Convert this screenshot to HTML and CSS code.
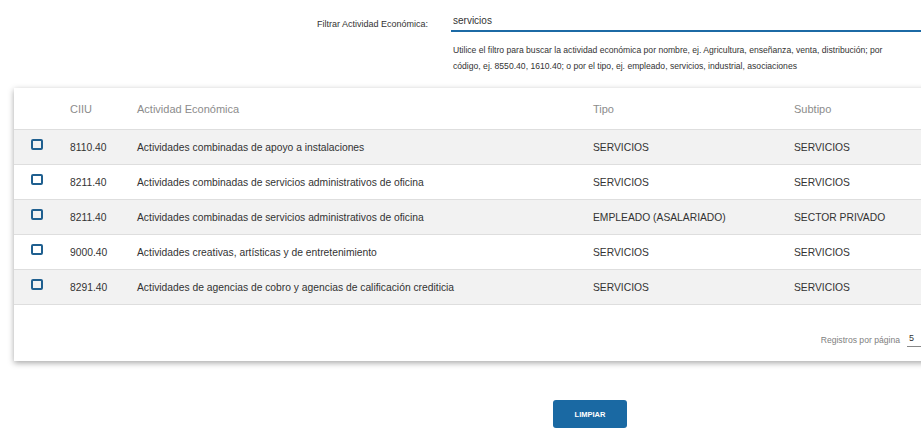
FILE: index.html
```html
<!DOCTYPE html>
<html lang="es">

<head>
    <meta charset="UTF-8" />
    <title>Actividad Económica</title>
    <link rel="stylesheet" href="styles.css">
</head>

<body>
    <div class="filter">
        <label class="filter-label" for="filtro">Filtrar Actividad Económica:</label>
        <div class="filter-field">
            <input id="filtro" class="filter-input" type="text" value="servicios" autofocus />
            <p class="hint">Utilice el filtro para buscar la actividad económica por nombre, ej. Agricultura, enseñanza, venta, distribución; por código, ej. 8550.40, 1610.40; o por el tipo, ej. empleado, servicios, industrial, asociaciones</p>
        </div>
    </div>

    <div class="card">
        <table class="grid">
            <thead>
                <tr>
                    <th class="col-check"></th>
                    <th class="col-code">CIIU</th>
                    <th class="col-name">Actividad Económica</th>
                    <th class="col-type">Tipo</th>
                    <th>Subtipo</th>
                </tr>
            </thead>
            <tbody>
                <tr>
                    <td class="col-check"><span class="check"></span></td>
                    <td class="code">8110.40</td>
                    <td>Actividades combinadas de apoyo a instalaciones</td>
                    <td>SERVICIOS</td>
                    <td>SERVICIOS</td>
                </tr>
                <tr>
                    <td class="col-check"><span class="check"></span></td>
                    <td class="code">8211.40</td>
                    <td>Actividades combinadas de servicios administrativos de oficina</td>
                    <td>SERVICIOS</td>
                    <td>SERVICIOS</td>
                </tr>
                <tr>
                    <td class="col-check"><span class="check"></span></td>
                    <td class="code">8211.40</td>
                    <td>Actividades combinadas de servicios administrativos de oficina</td>
                    <td>EMPLEADO (ASALARIADO)</td>
                    <td>SECTOR PRIVADO</td>
                </tr>
                <tr>
                    <td class="col-check"><span class="check"></span></td>
                    <td class="code">9000.40</td>
                    <td>Actividades creativas, artísticas y de entretenimiento</td>
                    <td>SERVICIOS</td>
                    <td>SERVICIOS</td>
                </tr>
                <tr>
                    <td class="col-check"><span class="check"></span></td>
                    <td class="code">8291.40</td>
                    <td>Actividades de agencias de cobro y agencias de calificación crediticia</td>
                    <td>SERVICIOS</td>
                    <td>SERVICIOS</td>
                </tr>
            </tbody>
        </table>
        <div class="pager">
            <span class="pager-label">Registros por página</span>
            <span class="pager-select">5</span>
        </div>
    </div>

    <div class="actions">
        <button class="btn" type="button">LIMPIAR</button>
    </div>
</body>

</html>
```

FILE: styles.css
```css
/* Общие стили */
html {
    overflow: hidden;
}

body {
    margin: 0;
    font-family: "Liberation Sans", Arial, sans-serif;
    color: #333;
    background: #fff;
    width: 921px;
}

.filter {
    display: grid;
    grid-template-columns: 428px 1fr;
    column-gap: 23px;
    padding-top: 10px;
}

.filter-label {
    text-align: right;
    font-size: 9px;
    color: #333;
    padding-top: 9px;
}

.filter-field {
    min-width: 0;
}

.filter-input {
    display: block;
    width: 100%;
    box-sizing: border-box;
    height: 22px;
    padding: 1px 2px 1px;
    border: none;
    border-bottom: 2px solid #1c6aa5;
    font-family: inherit;
    font-size: 10px;
    color: #333;
    outline: none;
    background: transparent;
}

.hint {
    margin: 10px 0 0 2px;
    width: 440px;
    font-size: 8.6px;
    line-height: 16px;
    color: #333;
}

.card {
    margin: 14px 0 0 14px;
    width: 930px;
    background: #fff;
    box-shadow: 0 2px 6px rgba(0, 0, 0, 0.35);
}

.grid {
    width: 100%;
    border-collapse: collapse;
    table-layout: fixed;
}

.grid th {
    height: 41px;
    padding: 0;
    text-align: left;
    font-weight: normal;
    font-size: 11px;
    color: #8c8c8c;
}

.grid td {
    height: 34px;
    padding: 0;
    font-size: 10.3px;
    color: #333;
    border-top: 1px solid #dedede;
    white-space: nowrap;
}

.grid tbody tr:nth-child(odd) {
    background: #f2f2f2;
}

.grid tbody tr:last-child td {
    border-bottom: 1px solid #dedede;
}

.col-check {
    width: 56px;
}

.col-code {
    width: 67px;
}

.col-name {
    width: 456px;
}

.col-type {
    width: 201px;
}

.grid td.col-check {
    padding-left: 17px;
    vertical-align: middle;
}

.check {
    display: block;
    width: 8px;
    height: 7px;
    border: 2px solid #1f5f8f;
    border-radius: 2px;
    margin-top: -5px;
}

.code {
    color: #444;
}

.pager {
    display: flex;
    justify-content: flex-end;
    align-items: center;
    gap: 7px;
    height: 56px;
    padding-right: 9px;
    padding-top: 13px;
    box-sizing: border-box;
}

.pager-label {
    font-size: 8.6px;
    color: #808080;
}

.pager-select {
    width: 26px;
    padding: 0 0 3px 2px;
    font-size: 9px;
    color: #333;
    border-bottom: 1px solid #888;
}

.actions {
    padding: 39px 0 0 553px;
}

.btn {
    width: 74px;
    height: 28px;
    background-color: #1a69a3;
    border: none;
    border-radius: 3px;
    color: #fff;
    font-family: inherit;
    font-weight: 700;
    font-size: 7.5px;
    cursor: pointer;
}
```
